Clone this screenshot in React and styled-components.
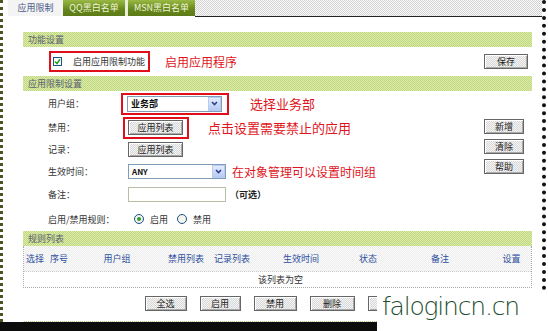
import React from "react";
import styled, { createGlobalStyle } from "styled-components";

const GlobalStyle = createGlobalStyle`
  html, body {
    margin: 0;
    padding: 0;
    background: #fff;
  }
  body {
    font-family: "Noto Sans CJK SC", "Liberation Sans", sans-serif;
    font-size: 9px;
    color: #333;
  }
`;

const dither = (a, b) =>
  `repeating-conic-gradient(${a} 0 25%, ${b} 0 50%) 0 0 / 2px 2px`;

const Page = styled.div`
  position: relative;
  width: 548px;
  height: 331px;
  overflow: hidden;
`;

const Frame = styled.div`
  box-sizing: border-box;
  width: 546px;
  height: 322px;
  border-left: 3px dotted #4a5520;
  border-right: 4px dotted #111;
  display: flex;
  flex-direction: column;
`;

// tabs
const TabBar = styled.div`
  display: flex;
  height: 17px;
  padding-left: 5px;
`;

const Tab = styled.div`
  box-sizing: border-box;
  width: ${({ w }) => w}px;
  height: 16px;
  line-height: 16px;
  font-size: 9px;
  text-align: center;
  color: ${({ active }) => (active ? "#4a5a8a" : "#eef5d8")};
  background: ${({ active }) =>
    active ? "#f4f4f4" : "linear-gradient(#9ab844, #66861c 60%, #5c7a16)"};
  border-right: ${({ gap }) => (gap ? `${gap}px solid #e8eed8` : "none")};
`;

const TabFiller = styled.div`
  flex: 1;
  height: 16px;
  background: ${dither("#d2d2d2", "#fafafa")};
  border-bottom: 1px solid #222;
`;

const Content = styled.div`
  display: flex;
  flex-direction: column;
  padding: 15px 10px 0 20px;
`;

const Band = styled.div`
  height: 15px;
  line-height: 15px;
  padding-left: 5px;
  font-size: 9px;
  color: #5a6070;
  background: ${dither("#c0d87a", "#dcebb0")};
`;

const EnableRow = styled.div`
  height: 29px;
  display: flex;
  align-items: center;
  justify-content: space-between;
`;

const Inline = styled.div`
  display: flex;
  align-items: center;
`;

const RedBox = styled.div`
  display: flex;
  align-items: center;
  border: 2px solid #e0101a;
  padding: ${({ pad }) => pad};
  margin-left: ${({ ml }) => ml}px;
`;

const Note = styled.span`
  color: #e0141c;
  font-size: ${({ size }) => size || 13}px;
  margin-left: ${({ ml }) => ml}px;
  white-space: nowrap;
`;

const CheckBox = styled.span`
  box-sizing: border-box;
  width: 9px;
  height: 9px;
  border: 1px solid #1c5180;
  background: #fff;
  display: flex;
  align-items: center;
  justify-content: center;
  margin-right: 11px;
`;

const Button = styled.div`
  box-sizing: border-box;
  width: ${({ w }) => w}px;
  height: 15px;
  line-height: 13px;
  text-align: center;
  font-size: 9px;
  color: #222;
  border: 1px solid #666;
  box-shadow: inset 1px 1px #fff, inset -1px -1px #aaa;
  background: ${dither("#d8d8d8", "#f4f4f4")};
  margin-right: ${({ mr }) => mr || 0}px;
  flex-shrink: 0;
`;

// settings form
const Settings = styled.div`
  height: 140px;
  display: grid;
  grid-template-columns: 1fr auto;
`;

const Form = styled.div`
  display: flex;
  flex-direction: column;
`;

const Row = styled.div`
  height: ${({ h }) => h}px;
  display: flex;
  align-items: center;
  padding-left: 25px;
`;

const Label = styled.span`
  width: 80px;
  flex-shrink: 0;
  color: #333;
`;

const SideButtons = styled.div`
  display: flex;
  flex-direction: column;
  gap: 5px;
  padding: 28px 8px 0 0;
`;

const Select = styled.div`
  box-sizing: border-box;
  width: ${({ w }) => w}px;
  height: ${({ h }) => h}px;
  border: 1px solid #7f9db9;
  background: #fff;
  display: flex;
  align-items: center;
  justify-content: space-between;
  padding-left: 3px;
  font-size: ${({ fs }) => fs || 9}px;
  font-weight: bold;
  color: #111;
`;

const Arrow = styled.span`
  width: 13px;
  height: 100%;
  box-sizing: border-box;
  border: 1px solid #b8cbf0;
  background: linear-gradient(#e4ecfd, #b6c9f2);
  display: flex;
  align-items: center;
  justify-content: center;
`;

const TextInput = styled.div`
  box-sizing: border-box;
  width: 98px;
  height: 15px;
  border: 1px solid #b9bfa6;
  background: #fff;
`;

const Hint = styled.span`
  margin-left: 4px;
  font-weight: bold;
  color: #222;
`;

const Radio = styled.span`
  box-sizing: border-box;
  width: 10px;
  height: 10px;
  border-radius: 50%;
  border: 1px solid #1c5180;
  background: #f4f4f0;
  display: flex;
  align-items: center;
  justify-content: center;
  margin: 0 6px 0 ${({ ml }) => ml}px;

  &::after {
    content: "";
    width: 4px;
    height: 4px;
    border-radius: 50%;
    background: ${({ on }) => (on ? "#2ca02c" : "transparent")};
  }
`;

// rule table
const Table = styled.div`
  border: 1px dotted #a8a8a8;
  border-top: none;
`;

const HeadRow = styled.div`
  height: 25px;
  display: grid;
  grid-template-columns: 22px 26px 90px 48px 44px 94px 40px 104px 1fr;
  align-items: center;
  background: ${dither("#ececec", "#fcfcfc")};
  border-bottom: 1px dotted #c8c8c8;
  color: #2c4fa0;
  text-align: center;
`;

const EmptyRow = styled.div`
  height: 15px;
  line-height: 15px;
  text-align: center;
  color: #333;
  padding-left: 6px;
`;

const ActionBar = styled.div`
  display: flex;
  justify-content: center;
  gap: 13px;
  margin-top: 8px;
`;

const BottomLine = styled.div`
  margin-top: 10px;
  height: 1px;
  background: ${dither("#b8c890", "#eef2e0")};
`;

const BlackBar = styled.div`
  height: 9px;
  background: #0c0c0c;
`;

const Watermark = styled.div`
  position: absolute;
  left: 377px;
  top: 290px;
  width: 171px;
  height: 41px;
  background: #fff;
  color: #1d4d2d;
  font-family: "DejaVu Sans", sans-serif;
  font-weight: 200;
  font-size: 25px;
  letter-spacing: -1.2px;
  line-height: 33px;
  padding-left: 5px;
  box-sizing: border-box;
  white-space: nowrap;
`;

const Check = () => (
  <svg width="7" height="7" viewBox="0 0 7 7">
    <path d="M1 3.5 L3 5.5 L6 1.2" stroke="#21a121" strokeWidth="1.5" fill="none" />
  </svg>
);

const Chevron = () => (
  <svg width="7" height="5" viewBox="0 0 7 5">
    <path d="M1 1 L3.5 3.5 L6 1" stroke="#2a3f8a" strokeWidth="1.6" fill="none" />
  </svg>
);

const columns = ["选择", "序号", "用户组", "禁用列表", "记录列表", "生效时间", "状态", "备注", "设置"];
// the fifth button sits under the watermark, its label is not visible
const actions = [
  { t: "全选", w: 42 },
  { t: "启用", w: 41 },
  { t: "禁用", w: 43 },
  { t: "删除", w: 45 },
  { t: "", w: 43 },
];

export default function App() {
  return (
    <Page>
      <GlobalStyle />
      <Frame>
        <TabBar>
          <Tab w={55} active>应用限制</Tab>
          <Tab w={65} gap={3}>QQ黑白名单</Tab>
          <Tab w={67}>MSN黑白名单</Tab>
          <TabFiller />
        </TabBar>

        <Content>
          <Band>功能设置</Band>
          <EnableRow>
            <Inline>
              <RedBox ml={26} pad="2px 3px 2px 2px">
                <CheckBox>
                  <Check />
                </CheckBox>
                <span>启用应用限制功能</span>
              </RedBox>
              <Note size={12} ml={15}>启用应用程序</Note>
            </Inline>
            <Button w={44} mr={4}>保存</Button>
          </EnableRow>

          <Band>应用限制设置</Band>
          <Settings>
            <Form>
              <Row h={25}>
                <Label>用户组：</Label>
                <RedBox ml={-7} pad="1px 5px 1px 4px">
                  <Select w={95} h={16}>
                    业务部
                    <Arrow>
                      <Chevron />
                    </Arrow>
                  </Select>
                </RedBox>
                <Note ml={21}>选择业务部</Note>
              </Row>
              <Row h={23}>
                <Label>禁用：</Label>
                <RedBox ml={-5} pad="1px 4px 2px 3px">
                  <Button w={55}>应用列表</Button>
                </RedBox>
                <Note ml={19}>点击设置需要禁止的应用</Note>
              </Row>
              <Row h={21}>
                <Label>记录：</Label>
                <Button w={55}>应用列表</Button>
              </Row>
              <Row h={22}>
                <Label>生效时间：</Label>
                <Select w={98} h={15} fs={8}>
                  ANY
                  <Arrow>
                    <Chevron />
                  </Arrow>
                </Select>
                <Note size={12} ml={6}>在对象管理可以设置时间组</Note>
              </Row>
              <Row h={25}>
                <Label>备注：</Label>
                <TextInput />
                <Hint>（可选）</Hint>
              </Row>
              <Row h={24}>
                <Label>启用/禁用规则：</Label>
                <Radio on ml={6} />
                <span>启用</span>
                <Radio ml={9} />
                <span>禁用</span>
              </Row>
            </Form>
            <SideButtons>
              <Button w={40}>新增</Button>
              <Button w={40}>清除</Button>
              <Button w={40}>帮助</Button>
            </SideButtons>
          </Settings>

          <Band>规则列表</Band>
          <Table>
            <HeadRow>
              {columns.map((c) => (
                <span key={c}>{c}</span>
              ))}
            </HeadRow>
            <EmptyRow>该列表为空</EmptyRow>
          </Table>

          <ActionBar>
            {actions.map((a, i) => (
              <Button key={i} w={a.w}>{a.t}</Button>
            ))}
          </ActionBar>
          <BottomLine />
        </Content>
      </Frame>
      <BlackBar />
      <Watermark>falogincn.cn</Watermark>
    </Page>
  );
}
